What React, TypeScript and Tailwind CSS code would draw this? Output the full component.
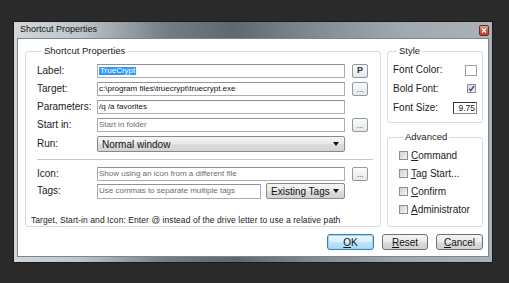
import React from 'react';

const font = "font-['Liberation_Sans',Arial,sans-serif]";
const grayBtn =
  'bg-[linear-gradient(#f4f4f4,#ebebeb_50%,#dddddd_51%,#cfcfcf)] border border-[#707070] rounded-[3px]';

function TextBox({
  text,
  muted,
  className = '',
  children,
}: {
  text?: string;
  muted?: boolean;
  className?: string;
  children?: React.ReactNode;
}) {
  return (
    <div
      className={`h-[14px] border border-[#abadb3] border-t-[#8e939b] bg-white flex items-center pl-[1px] text-[8px] leading-none whitespace-nowrap overflow-hidden ${
        muted ? 'text-[#6d6d6d]' : 'text-[#111]'
      } ${className}`}
    >
      {children ?? text}
    </div>
  );
}

function DotsButton({ label = '...', bold }: { label?: string; bold?: boolean }) {
  return (
    <div
      className={`w-[16px] h-[14px] ml-[7px] rounded-[2px] border border-[#8c9aa3] bg-[linear-gradient(#fafafa,#e6e8e6)] flex justify-center text-[#333] ${
        bold ? 'items-center text-[9px] font-bold' : 'items-end text-[8px] leading-[10px]'
      }`}
    >
      {label}
    </div>
  );
}

function Select({ text, className = '' }: { text: string; className?: string }) {
  return (
    <div
      className={`h-[16px] border border-[#8a8a8a] rounded-[2px] bg-[linear-gradient(#f5f5f5,#e9e9e9_50%,#dcdcdc_51%,#d4d4d4)] flex items-center justify-between pl-[4px] pr-[5px] text-[10px] text-[#111] ${className}`}
    >
      <span>{text}</span>
      <svg width="6" height="4" viewBox="0 0 6 4">
        <path d="M0 0h6L3 4z" fill="#111" />
      </svg>
    </div>
  );
}

function Row({ label, children }: { label: string; children: React.ReactNode }) {
  return (
    <div className="flex items-center">
      <div className="w-[60px] text-[10px] text-[#222] leading-none">{label}</div>
      {children}
    </div>
  );
}

function Check({ label, mnemonic }: { label: string; mnemonic: number }) {
  return (
    <div className="h-[16px] flex items-center gap-[3px] text-[10px] text-[#222]">
      <div className="w-[9px] h-[9px] border border-[#8f8f8f] bg-[linear-gradient(135deg,#d0d0d0,#f6f6f6)]" />
      <span>
        {label.slice(0, mnemonic)}
        <u>{label[mnemonic]}</u>
        {label.slice(mnemonic + 1)}
      </span>
    </div>
  );
}

export default function App() {
  return (
    <div className={`w-[509px] h-[283px] bg-[#2a2a2a] pt-[21px] pl-[13px] overflow-hidden ${font}`}>
      {/* Window */}
      <div className="w-[480px] h-[242px] border border-[#1b1b1b] flex flex-col bg-[linear-gradient(90deg,#d2d6d9,#bfc4c8_14%,#737d87_32%,#5e6872_46%,#7f8993_62%,#a2aab1_82%,#aab1b7)]">
        {/* Title bar */}
        <div className="h-[16px] flex items-center justify-between pl-[6px] pr-[3px]">
          <span className="text-[9px] text-[#111]">Shortcut Properties</span>
          <div className="w-[10px] h-[11px] rounded-[2px] border border-[#6b2d22] bg-[linear-gradient(#eaa08c,#d3573d_50%,#c23f25)] flex items-center justify-center">
            <svg width="6" height="5" viewBox="0 0 6 5">
              <path d="M1 0.5l4 4M5 0.5l-4 4" stroke="#fff" strokeWidth="1.3" />
            </svg>
          </div>
        </div>

        {/* Client */}
        <div className="mx-[3px] mb-[5px] flex-1 bg-white border border-[#7d858d] pl-[7px] pr-[5px] pt-[6px] flex flex-col">
          <div className="flex gap-[6px]">
            {/* Left group */}
            <fieldset className="w-[356px] h-[182px] border border-[#d5dbe0] rounded-[3px] pl-[11px] pt-[7px]">
              <legend className="ml-[5px] px-[2px] text-[9.5px] leading-[12px] text-[#222]">
                Shortcut Properties
              </legend>
              <div className="flex flex-col gap-[4px]">
                <Row label="Label:">
                  <TextBox className="w-[248px] bg-[#fdfbdc]">
                    <span className="bg-[#3399ff] text-white px-[1px]">TrueCrypt</span>
                  </TextBox>
                  <DotsButton label="P" bold />
                </Row>
                <Row label="Target:">
                  <TextBox className="w-[248px]" text="c:\program files\truecrypt\truecrypt.exe" />
                  <DotsButton />
                </Row>
                <Row label="Parameters:">
                  <TextBox className="w-[248px]" text="/q /a favorites" />
                </Row>
                <Row label="Start in:">
                  <TextBox className="w-[248px]" muted text="Start in folder" />
                  <DotsButton />
                </Row>
                <Row label="Run:">
                  <Select className="w-[248px]" text="Normal window" />
                </Row>
              </div>

              <div className="w-[336px] h-px bg-[#c8c8c8] mt-[7px]" />

              <div className="mt-[7px]">
                <Row label="Icon:">
                  <TextBox className="w-[248px]" muted text="Show using an icon from a different file" />
                  <DotsButton />
                </Row>
              </div>
              <div className="mt-[2px] h-[16px]">
                <Row label="Tags:">
                  <TextBox className="w-[164px] h-[15px]" muted text="Use commas to separate multiple tags" />
                  <Select className="w-[79px] ml-[5px]" text="Existing Tags" />
                </Row>
              </div>

              <div className="mt-[16px] -ml-[6px] text-[8.5px] leading-[10px] tracking-[0.07px] text-[#222] whitespace-nowrap">
                Target, Start-in and Icon: Enter @ instead of the drive letter to use a relative path
              </div>
            </fieldset>

            {/* Right column */}
            <div className="w-[96px] flex flex-col gap-[8px]">
              <fieldset className="h-[78px] border border-[#d5dbe0] rounded-[3px] pl-[5px] pr-[5px] pt-[4px]">
                <legend className="ml-[4px] px-[2px] text-[9.5px] leading-[12px] text-[#222]">Style</legend>
                <div className="flex flex-col gap-[3px] text-[10px] text-[#222]">
                  <div className="h-[16px] flex items-center justify-between">
                    <span>Font Color:</span>
                    <div className="w-[12px] h-[11px] border border-[#a0a0a0] bg-white mt-[3px]" />
                  </div>
                  <div className="h-[16px] flex items-center justify-between">
                    <span>Bold Font:</span>
                    <div className="w-[9px] h-[9px] border border-[#8f8f8f] bg-[linear-gradient(135deg,#d4d8e4,#f4f4f8)] flex items-center justify-center mr-[1px]">
                      <svg width="7" height="7" viewBox="0 0 7 7">
                        <path d="M1 3.8l1.8 1.9L6 1" stroke="#3e4f86" strokeWidth="1.4" fill="none" />
                      </svg>
                    </div>
                  </div>
                  <div className="h-[16px] flex items-center justify-between">
                    <span>Font Size:</span>
                    <div className="w-[24px] h-[12px] border border-[#8a8a8a] border-t-[#333] border-l-[#333] bg-white text-[8.5px] leading-[10px] text-right pr-[1px] mt-[2px]">
                      9.75
                    </div>
                  </div>
                </div>
              </fieldset>

              <fieldset className="h-[96px] border border-[#d5dbe0] rounded-[3px] pl-[11px] pt-[4px]">
                <legend className="ml-[4px] px-[2px] text-[9.5px] leading-[12px] text-[#222]">Advanced</legend>
                <div className="flex flex-col gap-[2px]">
                  <Check label="Command" mnemonic={0} />
                  <Check label="Tag Start..." mnemonic={0} />
                  <Check label="Confirm" mnemonic={0} />
                  <Check label="Administrator" mnemonic={0} />
                </div>
              </fieldset>
            </div>
          </div>

          {/* Buttons */}
          <div className="mt-[7px] flex justify-end gap-[8px] text-[10px] text-[#111]">
            <div className="w-[47px] h-[16px] rounded-[3px] border border-[#3c7fb1] bg-[linear-gradient(#eaf6fd,#d9f0fc_50%,#bee6fd_51%,#a7d9f5)] shadow-[inset_0_0_0_1px_#9ed5f2] flex items-center justify-center">
              <span><u>O</u>K</span>
            </div>
            <div className={`w-[46px] h-[16px] ${grayBtn} flex items-center justify-center`}>
              <span><u>R</u>eset</span>
            </div>
            <div className={`w-[47px] h-[16px] ${grayBtn} flex items-center justify-center`}>
              <span><u>C</u>ancel</span>
            </div>
          </div>
        </div>
      </div>
    </div>
  );
}
